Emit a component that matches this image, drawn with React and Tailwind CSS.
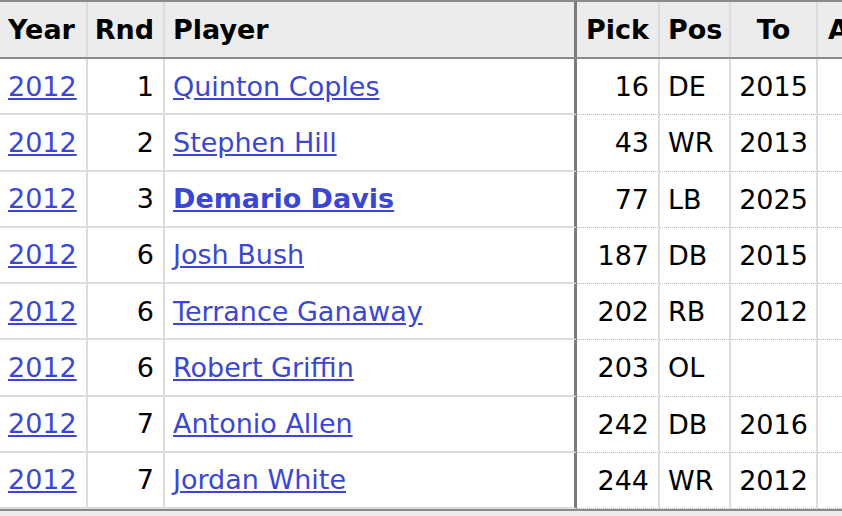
const rows = [
  { year: '2012', rnd: 1, player: 'Quinton Coples', pick: 16, pos: 'DE', to: '2015' },
  { year: '2012', rnd: 2, player: 'Stephen Hill', pick: 43, pos: 'WR', to: '2013' },
  { year: '2012', rnd: 3, player: 'Demario Davis', pick: 77, pos: 'LB', to: '2025', bold: true },
  { year: '2012', rnd: 6, player: 'Josh Bush', pick: 187, pos: 'DB', to: '2015' },
  { year: '2012', rnd: 6, player: 'Terrance Ganaway', pick: 202, pos: 'RB', to: '2012' },
  { year: '2012', rnd: 6, player: 'Robert Griffin', pick: 203, pos: 'OL', to: '' },
  { year: '2012', rnd: 7, player: 'Antonio Allen', pick: 242, pos: 'DB', to: '2016' },
  { year: '2012', rnd: 7, player: 'Jordan White', pick: 244, pos: 'WR', to: '2012' },
]

// left (frozen) cells: solid row lines; right cells: dotted row lines
const L = 'flex items-center border-r-2 border-r-[#dcdcdc] border-b-2 border-b-[#dcdcdc]'
const R = 'flex items-center border-r-2 border-r-[#dcdcdc] border-b border-b-[#b8b8b8] [border-bottom-style:dotted]'
const H = 'flex items-center border-r-2 border-r-[#dcdcdc]'

export default function App() {
  return (
    <div className="w-[842px] h-[516px] overflow-hidden bg-white text-black text-[27px] font-['DejaVu_Sans','Liberation_Sans',sans-serif] leading-none">
      <div className="border-t-2 border-[#8a8a8a]">
        <div className="flex h-[57px] bg-[#ececec] border-b-2 border-b-[#8a8a8a] font-bold">
          <div className={`${H} w-[88px] shrink-0 pl-2`}>Year</div>
          <div className={`${H} w-[77px] shrink-0 justify-end pr-[9px]`}>Rnd</div>
          <div className="flex items-center w-[412px] shrink-0 pl-2 border-r-[3px] border-r-[#7a7a7a]">Player</div>
          <div className={`${H} w-[83px] shrink-0 justify-end pr-[9px]`}>Pick</div>
          <div className={`${H} w-[71px] shrink-0 pl-2`}>Pos</div>
          <div className={`${H} w-[87px] shrink-0 justify-center`}>To</div>
          <div className="flex items-center pl-[10px] whitespace-nowrap">AP1</div>
        </div>

        {rows.map((r, i) => (
          <div key={i} className="flex h-[56.25px]">
            <div className={`${L} w-[88px] shrink-0 pl-2`}>
              <a href="#" className="text-[#3a47d5] underline">{r.year}</a>
            </div>
            <div className={`${L} w-[77px] shrink-0 justify-end pr-[9px]`}>{r.rnd}</div>
            <div className="flex items-center w-[412px] shrink-0 pl-2 border-r-[3px] border-r-[#7a7a7a] border-b-2 border-b-[#dcdcdc]">
              <a href="#" className={`text-[#3a47d5] underline whitespace-nowrap ${r.bold ? 'font-bold' : ''}`}>{r.player}</a>
            </div>
            <div className={`${R} w-[83px] shrink-0 justify-end pr-[9px]`}>{r.pick}</div>
            <div className={`${R} w-[71px] shrink-0 pl-2`}>{r.pos}</div>
            <div className={`${R} w-[87px] shrink-0 justify-center`}>{r.to}</div>
            <div className="flex-1 border-b border-b-[#b8b8b8] [border-bottom-style:dotted]"></div>
          </div>
        ))}

        <div className="h-[10px] bg-[#ececec] border-t-2 border-t-[#8a8a8a]"></div>
      </div>
    </div>
  )
}
